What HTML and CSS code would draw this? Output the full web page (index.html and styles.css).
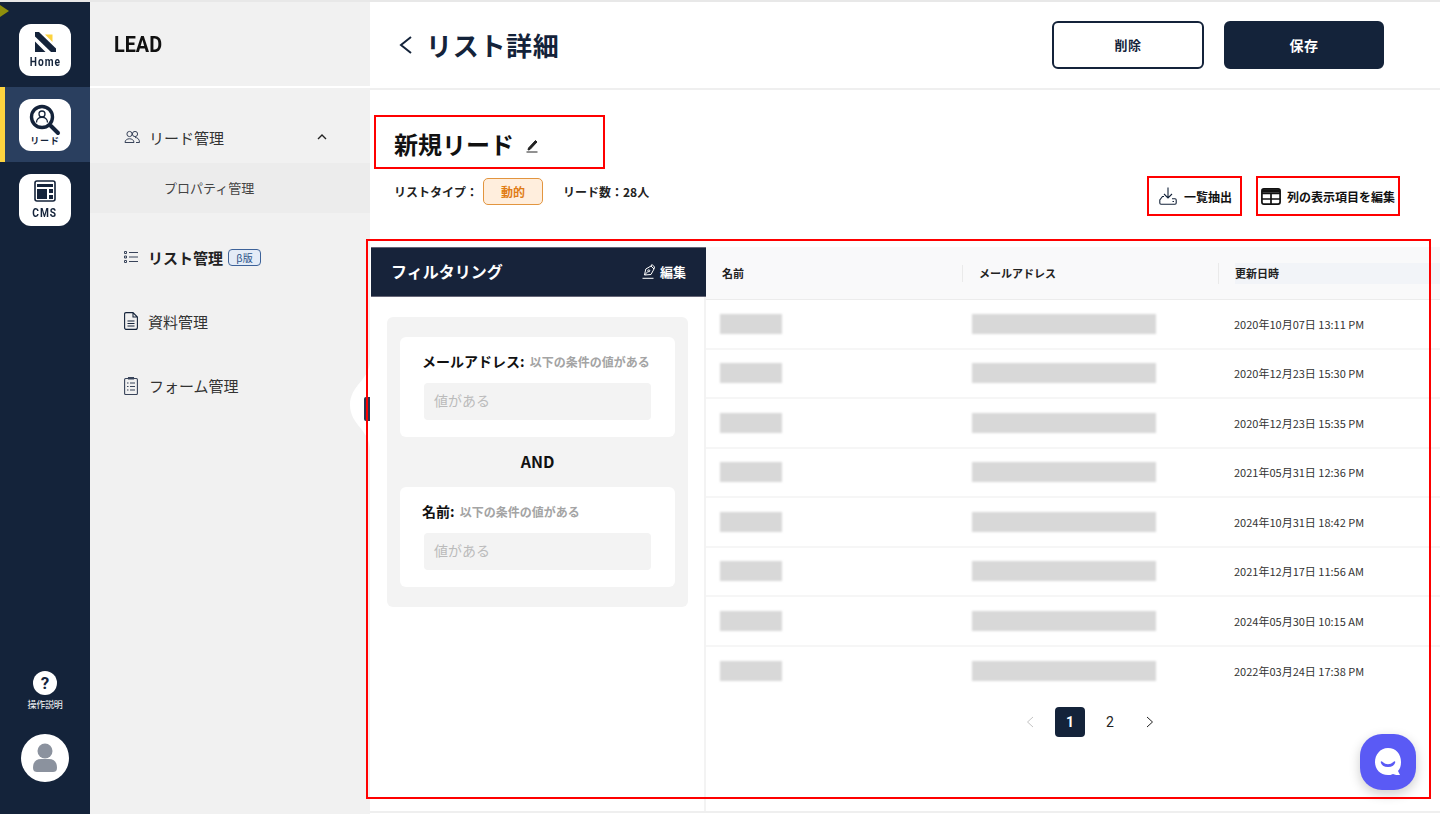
FILE: index.html
```html
<!DOCTYPE html>
<html lang="ja">
<head>
<meta charset="utf-8">
<title>リスト詳細</title>
<link rel="stylesheet" href="styles.css">
</head>
<body>
<div class="app">
	<nav class="rail">
		<i class="rail_mark"></i>
		<a class="rail_item">
			<span class="rail_btn">
				<svg width="21" height="20" viewBox="0 0 21 20"><path d="M0 0h4L21 16.500V20h-5L0 4.500z" fill="#14233a"/><path d="M0 9.500L10.500 20H0z" fill="#14233a"/><path d="M10 2.500h7.500V10z" fill="#fdd33f"/></svg>
				<b class="rail_en">Home</b>
			</span>
		</a>
		<a class="rail_item on">
			<span class="rail_btn">
				<svg width="32" height="32" viewBox="0 0 32 32" fill="none" stroke="#14233a"><circle cx="13" cy="13" r="10.500" stroke-width="3.400"/><circle cx="13" cy="10" r="3" stroke-width="1.300"/><path d="M7.500 18.500c0-7 11-7 11 0" stroke-width="1.300"/><path d="M22 22l7 7" stroke-width="4" stroke-linecap="round"/></svg>
				<b class="rail_jp">リード</b>
			</span>
		</a>
		<a class="rail_item">
			<span class="rail_btn">
				<svg width="22" height="22" viewBox="0 0 22 22" fill="none"><rect x="1" y="1" width="20" height="20" rx="2" stroke="#14233a" stroke-width="1.600"/><path d="M3 4h16v3H3zM3 9h10v10H3zM15 9h4v4h-4zM15 15h4v4h-4z" fill="#14233a"/></svg>
				<b class="rail_en rail_cms">CMS</b>
			</span>
		</a>
		<div class="rail_foot">
			<span class="help_ico">?</span>
			<span class="help_txt">操作説明</span>
			<span class="avatar">
				<svg width="26" height="30" viewBox="0 0 26 30" fill="#8b929e"><circle cx="13" cy="8" r="7.500"/><path d="M1 25c0-6 3-9 8-9h8c5 0 8 3 8 9 0 3-2 4-4 4H5c-2 0-4-1-4-4z"/></svg>
			</span>
		</div>
	</nav>

	<aside class="side">
		<div class="side_top"><span class="side_logo">LEAD</span></div>
		<ul class="side_menu">
			<li class="menu_row open">
				<svg class="menu_ico" width="16" height="14" viewBox="0 0 16 14" fill="none" stroke="#39445a"><circle cx="5.500" cy="4" r="2.600"/><circle cx="11" cy="4" r="2.600"/><path d="M1 12.500c0-5 9-5 9 0zM11 7.500c2.500 0 4.500 1.500 4.500 5H12"/></svg>
				<span>リード管理</span>
				<svg class="menu_arrow" width="10" height="6" viewBox="0 0 10 6" fill="none" stroke="#222" stroke-width="1.400"><path d="M1 5l4-4 4 4"/></svg>
			</li>
			<li class="menu_sub">プロパティ管理</li>
			<li class="menu_row list">
				<svg class="menu_ico" width="14" height="12" viewBox="0 0 14 12" fill="none" stroke="#39445a"><path d="M5 1.500h9M5 6h9M5 10.500h9"/><path d="M.5.500h2v2h-2zM.5 5h2v2h-2zM.5 9.500h2v2h-2z" stroke-width="1"/></svg>
				<b>リスト管理</b>
				<em class="beta">β版</em>
			</li>
			<li class="menu_row">
				<svg class="menu_ico" width="14" height="18" viewBox="0 0 14 18" fill="none" stroke="#14233a" stroke-width="1.100"><path d="M2 .6h7l4.400 4.400v10.400c0 1-.7 2-2 2H2c-1 0-1.400-1-1.400-2V2C.6 1 1 .6 2 .6zM9 .6V5h4.400"/><path d="M3.500 9h7M3.500 11.500h7M3.500 14h7"/></svg>
				<span>資料管理</span>
			</li>
			<li class="menu_row menu_form">
				<svg class="menu_ico" width="14" height="19" viewBox="0 0 14 19" fill="none" stroke="#39445a" stroke-width="1.100"><rect x=".6" y="2.500" width="12.800" height="16" rx="1"/><path d="M4.500 3V1.500h5V3zM3 7h1.500M6 7h5M3 10.500h1.500M6 10.500h5M3 14h1.500M6 14h5"/></svg>
				<span>フォーム管理</span>
			</li>
		</ul>
	</aside>

	<main class="main">
		<header class="head">
			<svg class="back" width="14" height="20" viewBox="0 0 14 20" fill="none" stroke="#14233a" stroke-width="2"><path d="M12 2L2 10l10 8"/></svg>
			<h1 class="head_title">リスト詳細</h1>
			<div class="head_btns">
				<a class="btn btn_line">削除</a>
				<a class="btn btn_fill">保存</a>
			</div>
		</header>

		<section class="info">
			<div class="info_left">
				<div class="name_box red">
					<h2 class="name">新規リード</h2>
					<svg class="name_pen" width="13" height="14" viewBox="0 0 13 14" fill="none" stroke="#222"><path d="M2.500 9l7-7.500 1.500 1.500-7 7.500-2 .5z" fill="#222"/><path d="M.5 13h11" stroke="#555" stroke-width="1.300"/></svg>
				</div>
				<div class="meta">
					<span>リストタイプ：</span>
					<span class="badge">動的</span>
					<span class="meta_count">リード数：28人</span>
				</div>
			</div>
			<div class="tools">
				<a class="tool tool_dl red">
					<svg width="18" height="18" viewBox="0 0 18 18" fill="none" stroke="#14233a" stroke-width="1.100"><path d="M9 .5v10M5 7l4 4 4-4"/><path d="M5 9.500H3.500L.8 13v3c0 .7.5 1.200 1.200 1.200h14c.7 0 1.200-.5 1.200-1.200v-3c0-.7-.5-1.200-1.200-1.200h-3"/><path d="M13.500 14.500h1.500"/></svg>
					<b>一覧抽出</b>
				</a>
				<a class="tool tool_col red">
					<svg width="20" height="17" viewBox="0 0 20 17" fill="none" stroke="#111" stroke-width="1.700"><rect x=".9" y=".9" width="18.200" height="15.200" rx="2"/><path d="M1 5.500h18M1 11h18M10 5.500V16"/><path d="M1 3h18" stroke-width="3.500"/></svg>
					<b>列の表示項目を編集</b>
				</a>
			</div>
		</section>

		<section class="work">
			<div class="filter">
				<div class="filter_head">
					<span class="filter_title">フィルタリング</span>
					<a class="filter_edit">
						<svg width="13" height="15" viewBox="0 0 13 15" fill="none" stroke="#fff"><path d="M2.500 11l1.300-6L9 2l3 3-3 5.500zM9 2l1-1.500 2.500 2.500L12 5M2.500 11L6 7.500"/><circle cx="6.800" cy="6.800" r="1"/><path d="M.5 14.300h11"/></svg>
						<b>編集</b>
					</a>
				</div>
				<div class="cond_wrap">
					<div class="cond">
						<p class="cond_label"><b>メールアドレス:</b> <span>以下の条件の値がある</span></p>
						<div class="cond_input">値がある</div>
					</div>
					<div class="cond_and">AND</div>
					<div class="cond">
						<p class="cond_label"><b>名前:</b> <span>以下の条件の値がある</span></p>
						<div class="cond_input">値がある</div>
					</div>
				</div>
			</div>

			<div class="table">
				<div class="t_head">
					<div class="t_h">名前</div>
					<div class="t_h">メールアドレス</div>
					<div class="t_h t_h_last"><span>更新日時</span></div>
				</div>
				<div class="t_row"><i class="blur blur_name"></i><i class="blur blur_mail"></i><span class="t_date">2020年10月07日 13:11 PM</span></div>
				<div class="t_row"><i class="blur blur_name"></i><i class="blur blur_mail"></i><span class="t_date">2020年12月23日 15:30 PM</span></div>
				<div class="t_row"><i class="blur blur_name"></i><i class="blur blur_mail"></i><span class="t_date">2020年12月23日 15:35 PM</span></div>
				<div class="t_row"><i class="blur blur_name"></i><i class="blur blur_mail"></i><span class="t_date">2021年05月31日 12:36 PM</span></div>
				<div class="t_row"><i class="blur blur_name"></i><i class="blur blur_mail"></i><span class="t_date">2024年10月31日 18:42 PM</span></div>
				<div class="t_row"><i class="blur blur_name"></i><i class="blur blur_mail"></i><span class="t_date">2021年12月17日 11:56 AM</span></div>
				<div class="t_row"><i class="blur blur_name"></i><i class="blur blur_mail"></i><span class="t_date">2024年05月30日 10:15 AM</span></div>
				<div class="t_row t_last"><i class="blur blur_name"></i><i class="blur blur_mail"></i><span class="t_date">2022年03月24日 17:38 PM</span></div>
				<div class="pager">
					<svg width="8" height="12" viewBox="0 0 8 12" fill="none" stroke="#c4c4c4"><path d="M7 1L1.500 6 7 11"/></svg>
					<span class="page on">1</span>
					<span class="page">2</span>
					<svg width="8" height="12" viewBox="0 0 8 12" fill="none" stroke="#222"><path d="M1 1l5.500 5L1 11"/></svg>
				</div>
			</div>
		</section>

		<div class="big_frame"></div>
	</main>

	<div class="toggle">
		<svg width="21" height="90" viewBox="0 0 21 90"><path d="M21 0C21 20 1 25 1 45s20 25 20 45z" fill="#fff"/></svg>
		<i></i>
	</div>
	<a class="chat">
		<svg width="34" height="34" viewBox="0 0 34 34"><path d="M17 3c8 0 13 6 13 14 0 4-1 7-3 9l2 4c-3 0-5 0-7-1-2 1-3 1-5 1-8 0-13-6-13-13S9 3 17 3z" fill="#fff"/><path d="M10.500 17c1 5.500 12 5.500 13 0-2 2-4 3-6.500 3s-4.500-1-6.500-3z" fill="#5a5af5" stroke="#5a5af5" stroke-width="1.500" stroke-linejoin="round"/></svg>
	</a>
</div>
</body>
</html>
```

FILE: styles.css
```css
*{ padding:0; margin:0; box-sizing:border-box;}
html,body{ height:100%; overflow:hidden;}
body{ background:#fff; color:#222; font-family:"Noto Sans CJK JP","Noto Sans",sans-serif;}
ul{ list-style:none;}
i,em{ font-style:normal;}
a{ text-decoration:none; color:inherit;}

.app{ display:flex; position:relative; height:814px; border-top:2px solid #e8e8e8;}

/* left rail */
.rail{ position:relative; width:90px; background:#14233a; display:flex; flex-direction:column; padding-top:10px;}
.rail_mark{ position:absolute; left:0; top:3px; border-left:9px solid #8f8f0c; border-top:6px solid transparent; border-bottom:6px solid transparent;}
.rail_item{ display:flex; align-items:center; justify-content:center; height:75px; border-left:5px solid transparent; padding-right:5px;}
.rail_item.on{ background:#2a3f5f; border-left-color:#fdd33f;}
.rail_btn{ width:52px; height:52px; border-radius:12px; background:#fff; display:flex; flex-direction:column; align-items:center; justify-content:center; color:#14233a; padding-top:1px;}
.rail_en{ display:block; font:700 12px/13px Roboto,sans-serif; letter-spacing:1.2px; margin-top:4px; transform:scaleX(.85);}
.rail_cms{ margin-top:5px;}
.rail_jp{ font-size:9px; line-height:10px; letter-spacing:.8px;}
.rail_item.on .rail_btn{ padding-top:0;}
.rail_foot{ margin-top:auto; display:flex; flex-direction:column; align-items:center; padding-bottom:32px;}
.help_ico{ width:24px; height:24px; border-radius:50%; background:#fff; color:#14233a; font:700 17px/24px Roboto,sans-serif; text-align:center;}
.help_txt{ color:#fff; font-size:9px; line-height:12px; margin-top:4px; letter-spacing:-.2px;}
.avatar{ width:48px; height:48px; border-radius:50%; background:#fff; margin-top:23px; display:flex; align-items:center; justify-content:center;}

/* side menu */
.side{ width:280px; flex:none; background:#f1f1f1;}
.side_top{ height:86px; border-bottom:2px solid #fff; padding:28px 0 0 24px; color:#111; font:700 22px/30px Roboto,sans-serif;}
.side_logo{ display:inline-block; transform:scaleX(.9); transform-origin:left center;}
.side_menu{ padding-top:25px;}
.menu_row{ display:flex; align-items:center; height:50px; padding:0 0 2px 34px; font-size:15px; color:#333;}
.menu_row b{ color:#222;}
.menu_ico{ margin-right:10px;}
.menu_row.open .menu_ico{ margin-right:9px;}
.menu_form .menu_ico{ margin-right:11px;}
.menu_arrow{ margin-left:auto; margin-right:43px;}
.menu_sub{ height:50px; line-height:50px; background:#ececec; padding-left:74px; font-size:13px; color:#444;}
.menu_row.list{ margin:20px 0 14px;}
.menu_row + .menu_row{ margin-top:14px;}
.beta{ margin-left:5px; width:33px; height:17px; line-height:15px; border:1px solid #3d6299; border-radius:4px; background:#e4ecf7; color:#2d5288; font-size:10px; text-align:center;}

/* main */
.main{ flex:1; position:relative; min-width:0;}
.head{ display:flex; align-items:center; height:88px; padding:0 56px 0 29px; border-bottom:2px solid #efefef;}
.back{ margin-right:13px;}
.head_title{ font-size:26px; line-height:36px; font-weight:700; color:#14233a; letter-spacing:.7px;}
.head_btns{ display:flex; gap:20px; margin-left:auto;}
.btn{ display:block; height:48px; line-height:44px; border-radius:6px; text-align:center; font-size:13px; font-weight:700; letter-spacing:.5px;}
.btn_line{ width:152px; border:2px solid #14233a; color:#14233a; background:#fff;}
.btn_fill{ width:160px; border:2px solid #14233a; background:#14233a; color:#fff; font-size:14px;}

.info{ display:flex; justify-content:space-between; height:157px; padding:25px 40px 0 4px;}
.red{ border:2px solid #f00;}
.name_box{ display:flex; align-items:center; gap:12px; width:231px; height:54px; padding:4px 0 0 18px;}
.name{ font-size:24px; line-height:32px; font-weight:700; color:#111;}
.name_pen{ margin-top:3px;}
.meta{ display:flex; align-items:center; height:27px; margin:9px 0 0 20px; font-size:12px; font-weight:700; color:#222;}
.badge{ width:60px; height:27px; line-height:25px; margin-left:5px; border:1px solid #e2953f; border-radius:5px; background:#ffeedd; color:#e07b14; text-align:center;}
.meta_count{ margin-left:20px;}
.tools{ display:flex; gap:14px; padding-top:61px;}
.tool{ display:flex; align-items:center; height:40px; font-size:12px; color:#111;}
.tool_dl{ width:95px; padding-left:10px; gap:7px;}
.tool_col{ width:144px; padding-left:3px; gap:6px;}

/* filter + table */
.work{ display:flex; height:566px; padding-left:1px; border-bottom:2px solid #efefef;}
.filter{ width:335px; flex:none; border-right:2px solid #f3f3f3;}
.filter_head{ display:flex; align-items:center; justify-content:space-between; height:50px; margin-right:-2px; background:#17233a; border-top:1px solid #667; border-bottom:1px solid #667; color:#fff; padding:0 20px 2px;}
.filter_title{ font-size:16px; font-weight:700;}
.filter_edit{ display:flex; align-items:center; gap:5px; font-size:13px;}
.cond_wrap{ margin:20px 16px 0 16px; padding:20px 13px; height:290px; border-radius:6px; background:#f3f3f3;}
.cond{ height:100px; border-radius:6px; background:#fff; padding:13px 24px 0;}
.cond_label{ font-size:14px; line-height:22px; color:#111; margin-left:-2px; white-space:nowrap;}
.cond_label span{ font-size:12px; font-weight:700; color:#a4a4a4; margin-left:2px;}
.cond_input{ height:37px; line-height:34px; margin-top:10px; padding-left:10px; border-radius:4px; background:#f3f3f3; color:#bbb; font-size:14px;}
.cond_and{ height:50px; line-height:49px; text-align:center; font-size:16px; font-weight:700; color:#111;}

.table{ flex:1; min-width:0;}
.t_head{ display:grid; grid-template-columns:256px 256px 1fr; align-items:center; height:53px; background:#f9f9fa; border-bottom:1px solid #ececec;}
.t_h{ height:17px; line-height:17px; padding-left:16px; font-size:11px; font-weight:700; color:#222; border-left:1px solid #eaeaea;}
.t_h:first-child{ border-left:0;}
.t_h_last{ height:21px; line-height:21px;}
.t_h_last span{ display:block; background:#f2f4f8;}
.t_row{ display:grid; grid-template-columns:252px 262px 1fr; align-items:center; height:49.5px; padding-left:14px; border-bottom:2px solid #f6f6f6;}
.t_last{ border-bottom:0;}
.blur{ display:block; height:20px; background:#d8d8d8; filter:blur(1px);}
.blur_name{ width:62px;}
.blur_mail{ width:184px;}
.t_date{ font-size:11px; color:#333; white-space:nowrap;}
.pager{ display:flex; align-items:center; justify-content:center; height:30px; margin-top:10.5px; padding-left:34px; font-size:14px;}
.page{ width:30px; height:30px; line-height:30px; text-align:center; border-radius:4px; font-family:Roboto,sans-serif;}
.page + .page{ margin-left:10px;}
.page.on{ background:#14233a; color:#fff; font-weight:700;}
.pager svg + .page{ margin-left:21px;}
.page + svg{ margin-left:21px;}

/* things lying over the page */
.big_frame{ position:absolute; left:-4px; top:237px; width:1065px; height:560px; border:2px solid #f00; pointer-events:none; z-index:2;}
.toggle{ position:absolute; left:349px; top:358px; width:21px; height:90px;}
.toggle svg{ display:block;}
.toggle i{ position:absolute; right:0; top:37px; width:6px; height:24px; background:#2a3650; border-radius:2px 0 0 2px;}
.chat{ position:absolute; left:1360px; top:732px; width:56px; height:56px; border-radius:22px; background:#5a5af5; box-shadow:0 4px 12px rgba(0,0,0,.2); display:flex; align-items:center; justify-content:center;}
```
